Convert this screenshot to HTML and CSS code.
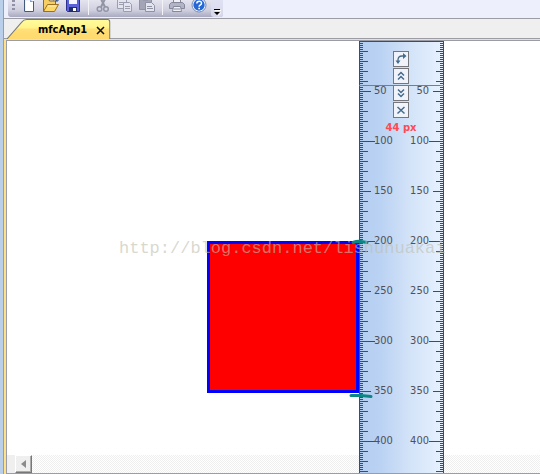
FILE: index.html
```html
<!DOCTYPE html>
<html lang="en">
<head>
<meta charset="utf-8">
<title>mfcApp1</title>
<link rel="stylesheet" href="styles.css">
</head>
<body>
<div class="window">
  <header class="dock">
    <div class="toolbar" role="toolbar" aria-label="Standard">
      <span class="grip"></span>
      <button class="tool" aria-label="New"><svg width="16" height="13" viewBox="0 0 16 13"><path d="M3-3h7l3 4v11H3z" fill="#fff"/><path d="M4 11V0h8" fill="none" stroke="#dfeafa"/><path d="M3.500-3v14.500h9V1" fill="none" stroke="#43597f"/><path d="M9 0v2h4" fill="#7f9cc8"/></svg></button>
      <button class="tool" aria-label="Open"><svg width="16" height="13" viewBox="0 0 16 13"><path d="M.5 11.500V-1h5l1 2h6v4" fill="#f5cf63" stroke="#8c6a20"/><path d="M.5 11.500l4-7h11l-4 7z" fill="#ffd868" stroke="#9a7020"/><path d="M5 6h8" stroke="#fff2b0"/><path d="M10 0q3-2 4 1m-2 0h3V-1" fill="none" stroke="#2f4f85"/></svg></button>
      <button class="tool" aria-label="Save"><svg width="16" height="13" viewBox="0 0 16 13"><path d="M1.500-3h13v14.500h-12l-1-1z" fill="#5b62d5" stroke="#2c318f"/><path d="M4-3h8v7H4z" fill="#f3f5ff"/><path d="M4 7h8v5H4z" fill="#222e68"/><path d="M8 8h3v3H8z" fill="#fff"/></svg></button>
      <span class="sep"></span>
      <button class="tool" aria-label="Cut"><svg width="16" height="13" viewBox="0 0 16 13" fill="none" stroke="#9294a6"><path d="M5-3l5 10M11-3L6 7" stroke-width="2"/><circle cx="4.500" cy="9" r="2.300" stroke-width="1.500"/><circle cx="11" cy="9" r="2.300" stroke-width="1.500"/></svg></button>
      <button class="tool" aria-label="Copy"><svg width="16" height="13" viewBox="0 0 16 13" fill="#e3e4ee" stroke="#9b9db0"><path d="M.5-2h7l2 2v8.500h-9z"/><path d="M2 2.500h5M2 4.500h5"/><path d="M6.500 2.500h6l2 2v7h-8z"/><path d="M8 6.500h5M8 8.500h5"/></svg></button>
      <button class="tool" aria-label="Paste"><svg width="16" height="13" viewBox="0 0 16 13" stroke="#8f91a4"><path d="M.5-2h12V9.500H.5z" fill="#a3a5b6"/><path d="M4-2h5v2H4z" fill="#d8d9e5"/><path d="M6.500 2.500h6l3 3v6h-9z" fill="#e3e4ee"/><path d="M8 6.500h5M8 8.500h6" fill="none"/></svg></button>
      <span class="sep"></span>
      <button class="tool" aria-label="Print"><svg width="16" height="13" viewBox="0 0 16 13" stroke="#85879b"><path d="M4.500-3h7v6h-7z" fill="#f0f0f6"/><path d="M2.500 2.500h11l2 2v4H.5v-4z" fill="#b2b4c3"/><path d="M4.500 6.500h7l1 5h-9z" fill="#f0f0f6"/><path d="M5 9h6"/></svg></button>
      <button class="tool" aria-label="Help"><svg width="16" height="13" viewBox="0 0 16 13"><circle cx="8" cy="5" r="7" fill="#fff" stroke="#7189b5"/><circle cx="8" cy="5" r="5.700" fill="#2468d8"/><path d="M5.800 3.500q0-2.300 2.400-2.300t2.300 2q0 1.300-1.500 2-.9.500-.9 1.500" fill="none" stroke="#fff" stroke-width="1.500"/><path d="M7.300 7.800h1.700v1.500H7.300z" fill="#fff"/></svg></button>
      <button class="more" aria-label="Toolbar options"><svg width="7" height="7" viewBox="0 0 7 7"><path d="M0 0h6v1H0zM0 3h6L3 6z"/><path d="M1 1h6v1H1zM4 6l3-3v1L4 7z" fill="#fff"/></svg></button>
    </div>
  </header>
  <nav class="tabs">
    <div class="tab">
      <svg class="tab-shape" viewBox="0 0 106 19" preserveAspectRatio="none">
        <defs><linearGradient id="g" x2="0" y2="1"><stop offset="0" stop-color="#fffb9c"/><stop offset=".42" stop-color="#fff48a"/><stop offset=".5" stop-color="#ffdf78"/><stop offset="1" stop-color="#ffd96b"/></linearGradient></defs>
        <path d="M0 19L15 3Q17 .5 20 .5H102.500Q104.500.5 104.500 2.500V19" fill="url(#g)" stroke="#77777b"/>
      </svg>
      <a class="tab-name" href="#view">mfcApp1</a>
      <button class="tab-close" aria-label="Close tab"><svg width="9" height="9" viewBox="0 0 9 9"><path d="M1 1l7 7M8 1L1 8" stroke="#111" stroke-width="1.500"/></svg></button>
    </div>
  </nav>
  <main class="frame">
    <div class="view" id="view">
      <div class="canvas">
        <div class="square"></div>
      </div>
      <div class="scrollbar"><button class="arrow" aria-label="Scroll left"><svg width="5" height="8" viewBox="0 0 5 8"><path d="M5 0v8L0 4z" fill="#8b8b8b"/></svg></button><span class="track"></span></div>
      <section class="ruler" aria-label="Ruler">
        <div class="row"><span>50</span><span>50</span></div>
        <div class="row"><span>100</span><span>100</span></div>
        <div class="row"><span>150</span><span>150</span></div>
        <div class="row"><span>200</span><span>200</span></div>
        <div class="row"><span>250</span><span>250</span></div>
        <div class="row"><span>300</span><span>300</span></div>
        <div class="row"><span>350</span><span>350</span></div>
        <div class="row"><span>400</span><span>400</span></div>
        <div class="controls">
          <button aria-label="Rotate"><svg width="14" height="14" viewBox="0 0 14 14"><path d="M4 10.500V8q0-4 4-4h2" fill="none" stroke="#456b8d" stroke-width="1.300"/><path d="M9 1l3.500 3L9 7zM1.500 8.500h5L4 12z" fill="#456b8d"/></svg></button>
          <button aria-label="Shorter"><svg width="14" height="14" viewBox="0 0 14 14"><path d="M4 6.500l3-3 3 3M4 10.500l3-3 3 3" fill="none" stroke="#456b8d" stroke-width="1.500"/></svg></button>
          <button aria-label="Longer"><svg width="14" height="14" viewBox="0 0 14 14"><path d="M4 3.500l3 3 3-3M4 7.500l3 3 3-3" fill="none" stroke="#456b8d" stroke-width="1.500"/></svg></button>
          <button aria-label="Close ruler"><svg width="14" height="14" viewBox="0 0 14 14"><path d="M3.500 4l7 6.500M10.500 4l-7 6.500" stroke="#456b8d" stroke-width="1.500"/></svg></button>
          <output class="reading">44 px</output>
        </div>
        <div class="guide"></div>
      </section>
      <svg class="marks" width="26" height="162" viewBox="0 0 26 162" fill="none" stroke="#0b8684" stroke-linecap="round"><path d="M4 3.500q4-1.500 8-1l6 1" stroke-width="3"/><path d="M2 156.500l10 0 10 1" stroke-width="3"/></svg>
      <p class="watermark">http://blog.csdn.net/lishuhuakai</p>
    </div>
  </main>
</div>
</body>
</html>
```
FILE: styles.css
```css
* { box-sizing: border-box; }

body {
  margin: 0;
  font: 11px/14px "DejaVu Sans Condensed", "DejaVu Sans", sans-serif;
  color: #444;
}

button {
  margin: 0;
  padding: 0;
  border: 0;
  background: none;
}

svg { display: block; }

.window {
  display: flex;
  flex-direction: column;
  height: 100vh;
  overflow: hidden;
  background: #efefef;
  border-left: 3px solid #b9cfea;
}

.dock {
  flex: none;
  height: 19px;
  padding-left: 4px;
  background: #edeffc;
  border-bottom: 1px solid #9c9ca4;
  border-left: 1px solid #9c9ca4;
}

.toolbar {
  display: flex;
  width: max-content;
  height: 17px;
  background: linear-gradient(#e4e4ef, #cfcfdf 60%, #a9a9c2);
  border-radius: 0 0 3px 3px;
}

.grip {
  width: 3px;
  margin: 0 3px 0 4px;
  background: repeating-linear-gradient(#8f90a8 0 2px, transparent 2px 4px);
  height: 10px;
}

.tool {
  display: flex;
  justify-content: center;
  width: 22px;
  height: 13px;
}

.sep {
  width: 1px;
  height: 15px;
  margin: 0 3px 0 4px;
  background: #f2f2f8;
}

.more {
  display: flex;
  justify-content: center;
  width: 12px;
  margin-left: 1px;
  padding-top: 9px;
  background: linear-gradient(#e0e1f1, #d6d7ea);
  border-radius: 0 0 3px 3px;
}

.tabs {
  flex: none;
  display: flex;
  height: 19px;
  padding-left: 3px;
  border-left: 1px solid #9c9ca4;
}

.tab {
  position: relative;
  z-index: 1;
  display: flex;
  align-items: center;
  gap: 9px;
  height: 20px;
  padding: 1px 6px 0 31px;
}

.tab-shape {
  position: absolute;
  inset: 0;
  width: 100%;
  height: 100%;
}

.tab-name {
  position: relative;
  color: #000;
  font-weight: bold;
  text-decoration: none;
}

.tab-close {
  position: relative;
  padding-top: 2px;
}

.frame {
  flex: 1;
  min-height: 0;
  padding: 1px 0 0 2px;
  background: #ffe18a;
  border-top: 1px solid #9c9ca4;
  border-left: 1px solid #9c9ca4;
}

.view {
  position: relative;
  display: flex;
  flex-direction: column;
  height: 100%;
  overflow: hidden;
  background: #fff;
  border: solid #9c9ca4;
  border-width: 1px 0 1px 1px;
}

.canvas {
  flex: 1;
  padding: 200px 0 0 200px;
}

.square {
  width: 152px;
  height: 152px;
  background: #f00;
  border: 3px solid #00f;
}

.scrollbar {
  display: flex;
  height: 18px;
  padding-left: 8px;
  background: #efefef;
}

.arrow {
  display: grid;
  place-items: center;
  width: 17px;
  background: #efefef;
  border: 1px solid;
  border-color: #fff #777 #777 #fff;
  box-shadow: inset -1px -1px #aaa;
}

.track {
  flex: 1;
  background: repeating-conic-gradient(#efefef 0 25%, #fff 0 50%) 0 0 / 2px 2px;
}

/* Ticks every 2, 10, 50 and 100 pixels along both edges. */
.ruler {
  --tick: linear-gradient(#484c52 1px, transparent 1px);
  --edge: linear-gradient(#484c52, #484c52);
  position: absolute;
  top: 0;
  bottom: 0;
  left: 352px;
  width: 85px;
  padding: 25px 15px 0;
  overflow: hidden;
  color: #505058;
  background:
    var(--edge) 0 0 / 1px 100% no-repeat,
    var(--edge) 100% 0 / 1px 100% no-repeat,
    var(--edge) 0 0 / 100% 1px no-repeat,
    var(--tick) 0 0 / 4px 2px repeat-y,
    var(--tick) 100% 0 / 4px 2px repeat-y,
    var(--tick) 0 0 / 9px 10px repeat-y,
    var(--tick) 100% 0 / 8px 10px repeat-y,
    var(--tick) 0 0 / 12px 50px repeat-y,
    var(--tick) 100% 0 / 11px 50px repeat-y,
    var(--tick) 0 0 / 16px 100px repeat-y,
    var(--tick) 100% 0 / 15px 100px repeat-y,
    linear-gradient(90deg, #b3cef2, #bad2f3 25%, #d3e3f8 60%, #e8f2ff);
}

.row {
  display: flex;
  align-items: center;
  justify-content: space-between;
  height: 50px;
}

.controls {
  position: absolute;
  top: 10px;
  left: 0;
  right: 1px;
  display: flex;
  flex-direction: column;
  align-items: center;
  gap: 1px;
}

.controls button {
  width: 16px;
  height: 16px;
  background: #f0f4fa;
  border: 1px solid #75777c;
}

.reading {
  margin-top: 2px;
  color: #ff4a52;
  font: bold 10px/14px "DejaVu Sans", sans-serif;
}

.guide {
  position: absolute;
  top: 44px;
  left: 0;
  right: 0;
  height: 1px;
  background: #e0515c;
}

.marks {
  position: absolute;
  top: 198px;
  left: 342px;
}

.watermark {
  position: absolute;
  top: 198px;
  left: 112px;
  margin: 0;
  color: rgb(190 190 175 / 60%);
  font: 17px/20px "Liberation Mono", monospace;
}
```
